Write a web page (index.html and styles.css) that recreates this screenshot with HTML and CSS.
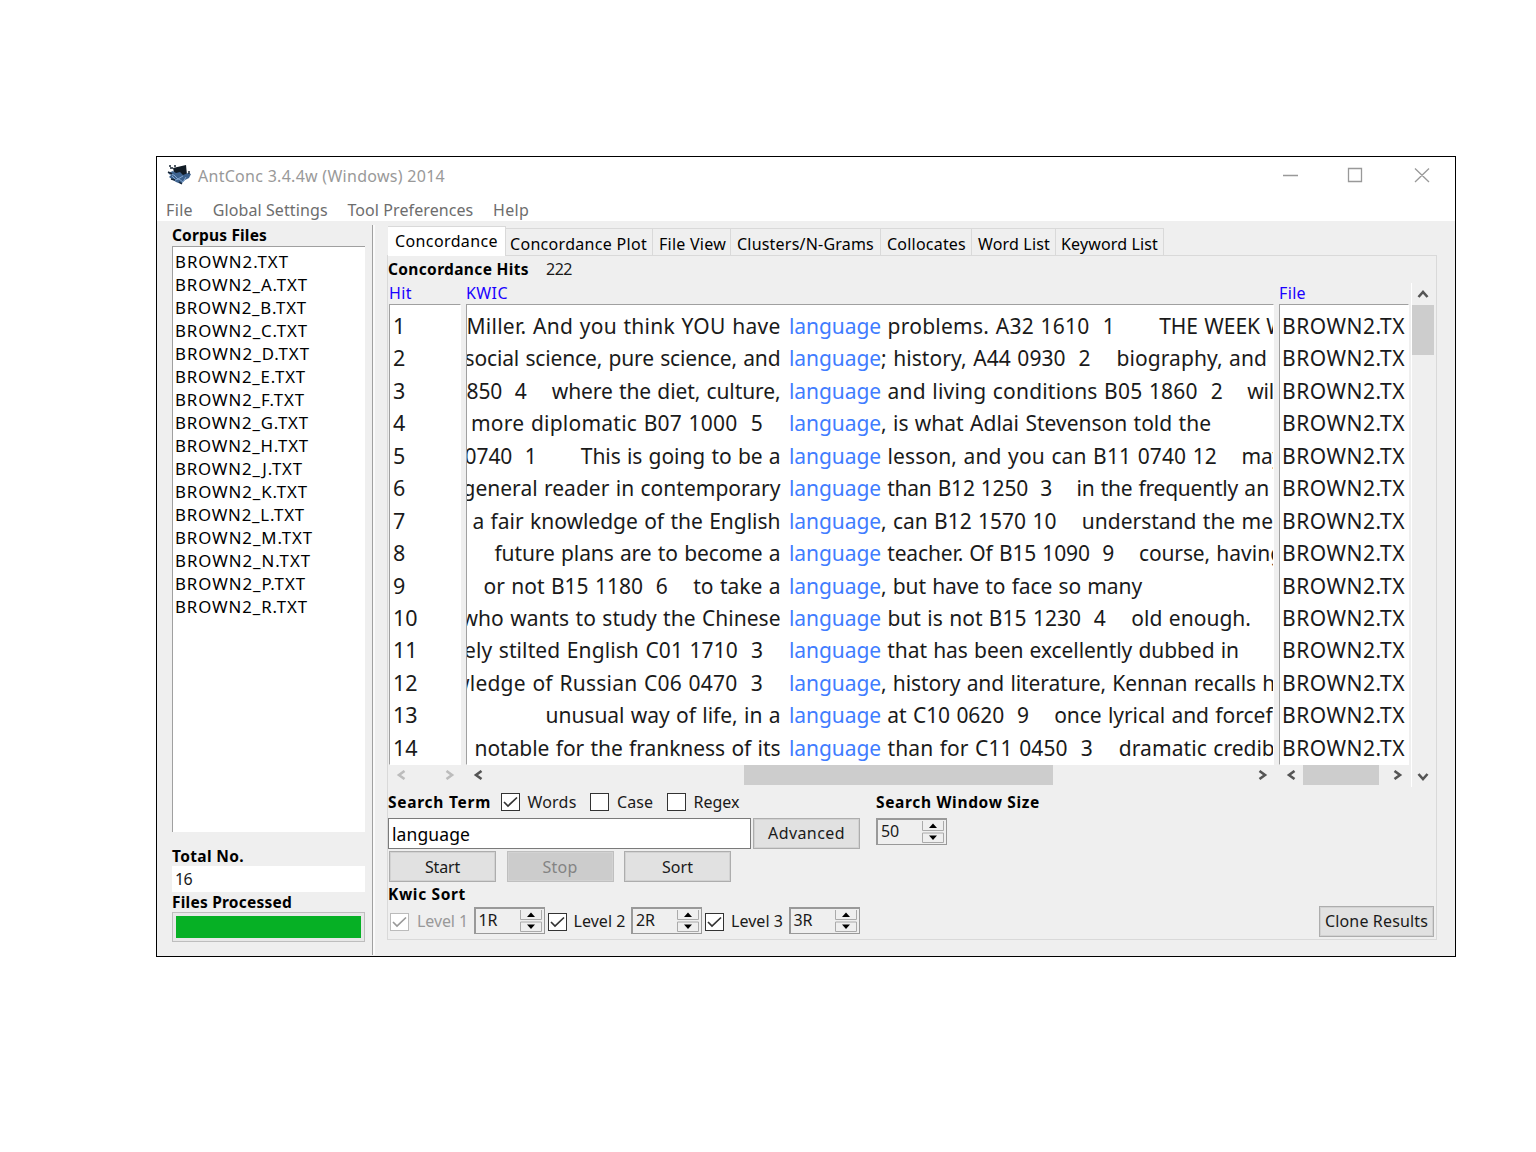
FILE: index.html
```html
<!DOCTYPE html>
<html lang="en">
<head>
<meta charset="utf-8">
<title>AntConc 3.4.4w (Windows) 2014</title>
<link rel="stylesheet" href="styles.css">
</head>
<body>
<svg width="0" height="0" class="defs">
  <symbol id="left" viewBox="0 0 10 10"><path d="M8.500 1 3 5l5.500 4" fill="none" stroke="currentColor" stroke-width="2.600"/></symbol>
  <symbol id="right" viewBox="0 0 10 10"><path d="M1.500 1 7 5 1.500 9" fill="none" stroke="currentColor" stroke-width="2.600"/></symbol>
  <symbol id="up" viewBox="0 0 12 10"><path d="M1.500 8 6 3l4.500 5" fill="none" stroke="currentColor" stroke-width="2.600"/></symbol>
  <symbol id="down" viewBox="0 0 12 10"><path d="M1.500 2 6 7l4.500-5" fill="none" stroke="currentColor" stroke-width="2.600"/></symbol>
  <symbol id="check" viewBox="0 0 15 14"><path d="M1 7l4 4 9-8.500" fill="none" stroke="currentColor" stroke-width="1.700"/></symbol>
  <symbol id="spin" viewBox="0 0 22 22">
    <path d="M.5 0v9.500h21V0M.5 21.500v-9.500h21v9.500z" fill="none" stroke="#aaa"/>
    <path d="M7 7h8l-4-4.500zM7 14.500h8L11 19z" fill="#000"/>
  </symbol>
</svg>
<main class="window">
  <header class="titlebar">
    <svg class="logo" width="24" height="20" viewBox="0 0 24 20">
      <path d="M6 3 19 0l1 10-12 2z" fill="#111b25"/>
      <path d="M1 8l5-2 3 2 4-1 3 3 5-2 3 1-2 4-4 2-4 4-5-2-3-2-4-3 2-2z" fill="#3d628e"/>
      <path d="M2 9l5 1 4 4 5-3M8 15l4-1 4 3 3-5M5 11l3 3" stroke="#82a5ce" fill="none"/>
      <path d="M2 1h2M7 1h2M3 3h3M1 7l4 2M22 6v3M4 14l4 1M12 17l3 2" stroke="#182635" stroke-width="1.500"/>
    </svg>
    <span class="caption" data-w="247">AntConc 3.4.4w (Windows) 2014</span>
    <svg class="winbtns" width="150" height="18" viewBox="0 0 150 18" fill="none" stroke="#999" stroke-width="1.300">
      <path d="M1 9.500h15M66.500 2.500h13v13h-13zM133 2.500l14 13.500M147 2.500 133 16"/>
    </svg>
  </header>
  <nav class="menu">
    <span data-w="27">File</span><span data-w="115">Global Settings</span><span data-w="126">Tool Preferences</span><span data-w="36">Help</span>
  </nav>
  <div class="content">
    <aside class="side">
      <b class="h-corpus"><span data-w="95">Corpus Files</span></b>
      <div class="files">
        <div><span data-w="114">BROWN2.TXT</span></div><div><span data-w="133">BROWN2_A.TXT</span></div><div><span data-w="132">BROWN2_B.TXT</span></div><div><span data-w="133">BROWN2_C.TXT</span></div><div><span data-w="135">BROWN2_D.TXT</span></div><div><span data-w="131">BROWN2_E.TXT</span></div><div><span data-w="130">BROWN2_F.TXT</span></div><div><span data-w="134">BROWN2_G.TXT</span></div><div><span data-w="134">BROWN2_H.TXT</span></div><div><span data-w="128">BROWN2_J.TXT</span></div><div><span data-w="133">BROWN2_K.TXT</span></div><div><span data-w="130">BROWN2_L.TXT</span></div><div><span data-w="138">BROWN2_M.TXT</span></div><div><span data-w="136">BROWN2_N.TXT</span></div><div><span data-w="131">BROWN2_P.TXT</span></div><div><span data-w="133">BROWN2_R.TXT</span></div>
      </div>
      <b class="h-total"><span data-w="72">Total No.</span></b>
      <div class="total"><span data-w="17">16</span></div>
      <b class="h-proc"><span data-w="120">Files Processed</span></b>
      <div class="progress"><i></i></div>
    </aside>
    <div class="splitter"></div>
    <section class="tool">
      <div class="tabs">
        <div class="tab active"><span data-w="103">Concordance</span></div><div class="tab t2"><span data-w="137">Concordance Plot</span></div><div class="tab t3"><span data-w="67">File View</span></div><div class="tab t4"><span data-w="137">Clusters/N-Grams</span></div><div class="tab t5"><span data-w="79">Collocates</span></div><div class="tab t6"><span data-w="72">Word List</span></div><div class="tab t7"><span data-w="97">Keyword List</span></div>
      </div>
      <div class="pane">
        <div class="hits"><b data-w="141">Concordance Hits</b><span data-w="26">222</span></div>
        <div class="results">
          <div class="col hit">
            <div class="colhead"><span data-w="23">Hit</span></div>
            <div class="list"><div>1</div><div>2</div><div>3</div><div>4</div><div>5</div><div>6</div><div>7</div><div>8</div><div>9</div><div>10</div><div>11</div><div>12</div><div>13</div><div>14</div></div>
            <div class="hbar off"><svg width="10" height="10"><use href="#left"/></svg><svg width="10" height="10"><use href="#right"/></svg></div>
          </div>
          <div class="col kwic">
            <div class="colhead"><span data-w="42">KWIC</span></div>
            <div class="list">
              <div><p><span data-w="314">Miller. And you think YOU have</span></p><em data-w="92">language</em><span data-w="234"> problems. A32 1610  1</span><span data-w="145">       THE WEEK</span> W</div>
              <div><p><span data-w="316">social science, pure science, and</span></p><em data-w="92">language</em><span data-w="386">; history, A44 0930  2    biography, and</span></div>
              <div><p><span data-w="314">850  4    where the diet, culture,</span></p><em data-w="92">language</em><span data-w="342"> and living conditions B05 1860  2</span><span data-w="56">    will</span></div>
              <div><p class="gap"><span data-w="292">more diplomatic B07 1000  5</span></p><em data-w="92">language</em><span data-w="330">, is what Adlai Stevenson told the</span></div>
              <div><p><span data-w="316">0740  1       This is going to be a</span></p><em data-w="92">language</em><span data-w="336"> lesson, and you can B11 0740 12</span><span data-w="66">    may</span></div>
              <div><p><span data-w="318">general reader in contemporary</span></p><em data-w="92">language</em><span data-w="357"> than B12 1250  3    in the frequently</span> an</div>
              <div><p><span data-w="308">a fair knowledge of the English</span></p><em data-w="92">language</em><span data-w="392">, can B12 1570 10    understand the me</span></div>
              <div><p><span data-w="286">future plans are to become a</span></p><em data-w="92">language</em><span data-w="329"> teacher. Of B15 1090  9    course,</span> having</div>
              <div><p><span data-w="297">or not B15 1180  6    to take a</span></p><em data-w="92">language</em><span data-w="261">, but have to face so many</span></div>
              <div><p><span data-w="319">who wants to study the Chinese</span></p><em data-w="92">language</em><span data-w="370"> but is not B15 1230  4    old enough.</span></div>
              <div><p class="gap"><span data-w="299">ely stilted English C01 1710  3</span></p><em data-w="92">language</em><span data-w="358"> that has been excellently dubbed in</span></div>
              <div><p class="gap"><span data-w="310">wledge of Russian C06 0470  3</span></p><em data-w="92">language</em><span data-w="375">, history and literature, Kennan recalls</span> he</div>
              <div><p><span data-w="235">unusual way of life, in a</span></p><em data-w="92">language</em><span data-w="328"> at C10 0620  9    once lyrical and</span> forceful</div>
              <div><p><span data-w="306">notable for the frankness of its</span></p><em data-w="92">language</em><span data-w="326"> than for C11 0450  3    dramatic</span> credibi</div>
            </div>
            <div class="hbar"><svg width="10" height="10"><use href="#left"/></svg><i></i><svg width="10" height="10"><use href="#right"/></svg></div>
          </div>
          <div class="col file">
            <div class="colhead"><span data-w="27">File</span></div>
            <div class="list"><div>BROWN2.TX</div><div>BROWN2.TX</div><div>BROWN2.TX</div><div>BROWN2.TX</div><div>BROWN2.TX</div><div>BROWN2.TX</div><div>BROWN2.TX</div><div>BROWN2.TX</div><div>BROWN2.TX</div><div>BROWN2.TX</div><div>BROWN2.TX</div><div>BROWN2.TX</div><div>BROWN2.TX</div><div>BROWN2.TX</div></div>
            <div class="hbar"><svg width="10" height="10"><use href="#left"/></svg><i></i><svg width="10" height="10"><use href="#right"/></svg></div>
          </div>
          <div class="vbar"><svg width="12" height="10"><use href="#up"/></svg><i></i><svg width="12" height="10"><use href="#down"/></svg></div>
        </div>
        <div class="controls">
          <div class="search">
            <div class="line terms"><b data-w="103">Search Term</b>
              <span class="box"><svg width="15" height="14"><use href="#check"/></svg></span><span class="words" data-w="49">Words</span>
              <span class="box"></span><span class="case" data-w="36">Case</span>
              <span class="box"></span><span data-w="46">Regex</span></div>
            <div class="entry"><div class="input"><span data-w="78">language</span></div><div class="btn"><span data-w="77">Advanced</span></div></div>
            <div class="actions"><div class="btn"><span data-w="35">Start</span></div><div class="btn disabled"><span data-w="35">Stop</span></div><div class="btn"><span data-w="31">Sort</span></div></div>
          </div>
          <div class="size">
            <div class="line"><b data-w="164">Search Window Size</b></div>
            <div class="spinner"><span data-w="18">50</span><svg width="22" height="22"><use href="#spin"/></svg></div>
          </div>
        </div>
        <div class="line kwicsort"><b data-w="78">Kwic Sort</b></div>
        <div class="levels">
          <span class="box dim"><svg width="15" height="14"><use href="#check"/></svg></span><span class="lv dim" data-w="51">Level 1</span>
          <div class="spinner"><span data-w="19">1R</span><svg width="22" height="22"><use href="#spin"/></svg></div>
          <span class="box"><svg width="15" height="14"><use href="#check"/></svg></span><span class="lv" data-w="52">Level 2</span>
          <div class="spinner"><span data-w="19">2R</span><svg width="22" height="22"><use href="#spin"/></svg></div>
          <span class="box"><svg width="15" height="14"><use href="#check"/></svg></span><span class="lv" data-w="52">Level 3</span>
          <div class="spinner"><span data-w="19">3R</span><svg width="22" height="22"><use href="#spin"/></svg></div>
          <div class="btn clone"><span data-w="103">Clone Results</span></div>
        </div>
      </div>
    </section>
  </div>
</main>
<script src="fit.js"></script>
</body>
</html>
```
FILE: styles.css
```css
* { box-sizing: border-box; }
body { margin: 0; padding: 156px; background: #fff; font: 16px/20px "Noto Sans", "Open Sans", sans-serif; color: #1a1a1a; }
.defs { display: block; }
[data-w] { white-space: pre; flex: none; }
b { font-size: 15.500px; color: #000; }
svg { display: block; flex: none; }
.window { width: 1300px; height: 801px; border: 1px solid #000; background: #fff; }
.titlebar { display: flex; align-items: center; height: 37px; padding: 0 0 2px 10px; color: #999; }
.caption { margin-left: 7px; padding-top: 2px; }
.winbtns { margin-left: auto; margin-right: 23px; }
.menu { display: flex; gap: 19.700px; height: 27px; padding: 6px 0 0 9px; color: #6d6d6d; }
.content { display: flex; height: 735px; background: #efefef; }
.side { width: 215px; padding: 5px 7px 0 15px; }
.side b { display: block; height: 20px; }
.side .h-corpus { line-height: 19px; }
.files { width: 193px; height: 586px; background: #fff; border: solid #a0a0a0; border-width: 1px 0 0 1px; padding: 3px 0 0 2px; font-size: 16.800px; line-height: 23px; color: #000; }
.files div { height: 23px; }
.side .h-total { margin-top: 14px; }
.total { height: 26px; width: 193px; background: #fff; padding: 3px; }
.side .h-proc { height: 20px; line-height: 21px; }
.progress { width: 193px; height: 30px; border: 1.500px solid #bebebe; background: #e8e8e8; padding: 3px; }
.progress i { display: block; height: 100%; background: #06b025; }
.splitter { width: 3px; margin: 4px 0 1px; background: #fafafa; border-left: 1px solid #a0a0a0; }
.tool { width: 1050px; margin: 5px 0 0 12px; }
.tabs { display: flex; align-items: flex-end; height: 30px; padding-left: 1px; position: relative; z-index: 1; }
.tab { height: 28px; border: solid #d9d9d9; border-width: 1px 1px 1px 0; padding-top: 4.500px; color: #000; }
.tab.active { width: 118px; height: 30px; background: #fff; border-bottom: 0; padding: 4px 0 0 7px; }
.t2 { width: 147px; padding-left: 4px; }
.t3 { width: 78px; padding-left: 6px; }
.t4 { width: 150px; padding-left: 6px; }
.t5 { width: 91px; padding-left: 6px; }
.t6 { width: 84px; padding-left: 6px; }
.t7 { width: 108px; padding-left: 5px; }
.pane { height: 685px; margin-top: -1px; border: 1px solid #d9d9d9; }
.hits { display: flex; gap: 17px; height: 27px; padding-top: 3px; }
.results { display: flex; height: 504px; padding-left: 1px; }
.col { height: 100%; overflow: hidden; }
.hit { width: 72px; margin-right: 5px; }
.kwic { width: 808px; margin-right: 5px; }
.file { width: 130px; margin-right: 2px; }
.colhead { height: 21px; color: #1a00ff; line-height: 20px; }
.list { height: 461px; overflow: hidden; background: #fff; border: 1px solid #fff; border-top-color: #a0a0a0; border-left-color: #a0a0a0; padding-top: 5px; font-size: 21px; word-spacing: .9px; }
.list > div { display: flex; height: 32.450px; line-height: 32px; white-space: pre; overflow: hidden; }
.hit .list > div { padding-left: 3px; font-size: 21.500px; }
.file .list > div { padding-left: 2px; letter-spacing: .5px; width: 128px; }
.kwic p { display: flex; flex: none; justify-content: flex-end; width: 313.500px; margin: 0 8.500px 0 0; overflow: hidden; }
.kwic p.gap { padding-right: 17.500px; }
.kwic em { font-style: normal; color: #407cff; }
.hbar { display: flex; align-items: center; height: 20px; padding: 0 6px 0 7px; color: #555; }
.hbar svg:last-child { margin-left: auto; }
.hbar.off { color: #bcbcbc; }
.hbar i { height: 20px; background: #cdcdcd; }
.kwic .hbar i { width: 309px; margin-left: 261px; }
.file .hbar i { width: 76px; margin-left: 7px; }
.vbar { width: 23px; border-left: 1px solid #fff; display: flex; flex-direction: column; align-items: center; padding: 6px 0 5px; color: #555; }
.vbar i { width: 22px; height: 50px; background: #cdcdcd; margin-top: 6px; }
.vbar svg:last-child { margin-top: auto; }
.controls { display: flex; height: 96px; }
.search { width: 488px; }
.line { display: flex; align-items: center; height: 22px; }
.terms { margin-top: 4px; }
.box { display: grid; place-items: center; flex: none; width: 19px; height: 18px; border: 1.500px solid #333; background: #fff; color: #333; }
.terms .box { margin: 0 8px 0 9.500px; }
.terms .words { margin-right: 4px; }
.terms .case { margin-right: 4px; }
.entry { display: flex; gap: 2px; margin-top: 5px; }
.input { width: 363px; height: 31px; border: 1.500px solid #7a7a7a; background: #fff; padding: 5px 3px; font-size: 17.500px; color: #000; }
.btn { display: flex; justify-content: center; align-items: center; width: 107px; height: 31px; background: #e1e1e1; border: 1px solid #adadad; outline: 1px solid #d2d2d2; outline-offset: -2px; }
.btn.disabled { background: #ccc; border-color: #bfbfbf; color: #838383; }
.actions { display: flex; gap: 10.500px; padding: 2px 0 0 1px; }
.size .line { margin-top: 4px; }
.spinner { display: flex; width: 71px; height: 27px; border: 2px solid #999; border-right-width: 1px; border-bottom-width: 1px; justify-content: space-between; padding: 1px 2px 0 3px; flex: none; }
.size .spinner { margin-top: 5px; }
.kwicsort { margin-top: 0; }
.levels { display: flex; align-items: center; height: 31px; margin-top: 1px; padding: 0 2px; }
.levels .box { margin: 0 7px 0 0; }
.levels .box:not(:first-child) { margin-left: 0; }
.levels .spinner { margin: -3px 3px 0 5.500px; }
.lv { margin-top: -1px; }
.lv.dim { margin-left: 1px; }
.dim { color: #999; border-color: #bbb; }
.clone { width: 115px; margin-left: auto; }
.clone span, .entry .btn span { margin-top: -1px; }
```
FILE: fit.js
```js
// Adjusts tracking so that each label occupies its designated width in pixels.
document.querySelectorAll('[data-w]').forEach(el => {
  const range = document.createRange();
  range.selectNodeContents(el);
  const natural = range.getBoundingClientRect().width;
  el.style.letterSpacing = (el.dataset.w - natural) / el.textContent.length + 'px';
});
```
